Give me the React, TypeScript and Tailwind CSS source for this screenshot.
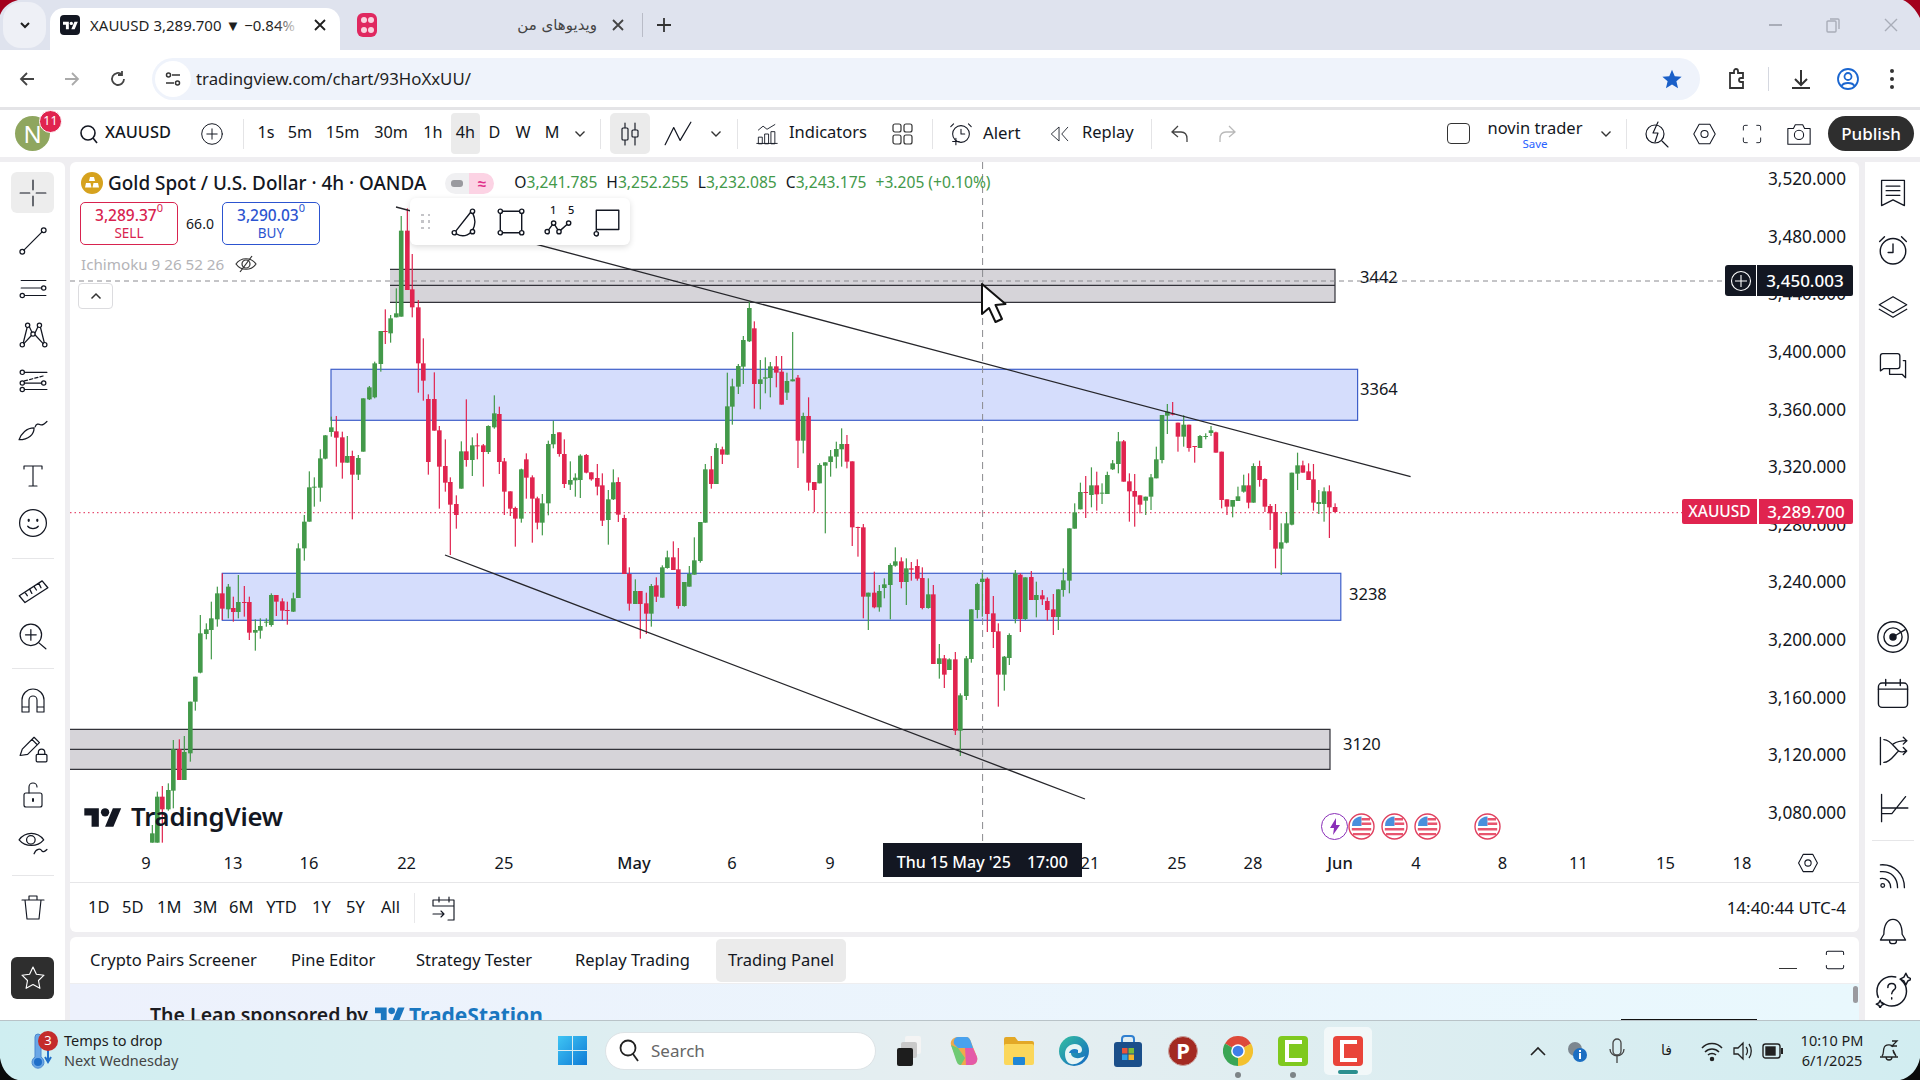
import React from "react";

type C = [number, number, number, number, number, number];
const G = 1, R = 0;
const sec11: C[] = [
[37,G,1300,1328,1275,1328],[52,G,1190,1328,1175,1328],[67,R,1190,1228,1158,1328],[85,G,1170,1228,1150,1232],[100,G,1048,1172,1020,1225],[118,R,1048,1140,1018,1140],[133,G,1056,1140,1008,1140],[151,G,905,1060,905,1085],[166,G,830,905,830,932],[181,G,700,818,645,820],[199,G,688,702,670,718],[214,G,655,690,605,778],[232,G,580,658,560,680],[247,R,580,626,520,660],[265,G,560,628,552,655],[280,R,624,636,590,665],[295,G,606,636,525,655],[313,R,606,608,558,650],[328,R,606,698,590,720],[346,G,690,698,658,752],[361,G,678,692,655,716],[379,G,665,668,655,680],[394,G,585,675,580,680],[409,R,585,605,585,648],[427,R,604,632,595,660],[442,R,630,632,605,674],[460,G,595,635,578,636],[475,G,445,594,430,594],[493,G,365,445,345,482],[508,G,262,365,214,365],[523,G,260,263,232,320],[541,G,175,263,148,305],[556,G,106,176,105,178],[574,G,82,96,50,110],[589,R,94,113,48,200],[607,R,112,188,95,236],[622,G,168,188,108,188],[637,R,168,224,152,358],[655,G,174,224,165,240],
];
const sec7: C[] = [
[547,G,595,755,595,755],[562,G,562,598,558,600],[575,G,490,592,485,595],[590,G,393,492,393,515],[601,R,393,395,328,432],[614,G,355,400,345,428],[628,G,340,352,265,352],[640,G,92,350,48,350],[655,R,92,270,25,270],[667,R,268,322,162,352],
];
const sec12: C[] = [
[55,R,22,190,0,278],[70,R,190,242,115,302],[85,R,297,486,283,524],[103,R,297,392,217,392],[118,R,391,500,378,626],[136,R,498,548,418,575],[151,R,546,614,532,765],[169,R,612,645,586,686],[184,G,454,566,424,566],[199,R,454,480,298,500],[217,G,436,480,412,528],[232,R,436,438,400,478],[250,R,436,456,432,560],[265,G,378,456,376,462],[283,G,340,382,286,386],[298,R,342,486,320,522],[313,R,484,575,474,645],[331,R,574,626,574,648],[346,R,624,656,620,740],[364,G,508,656,506,668],[379,R,478,533,460,596],[397,R,532,596,526,728],[412,R,595,668,590,688],[427,G,610,668,582,706],[445,G,432,610,422,646],[460,G,402,433,362,445],[478,R,397,462,397,470],[493,R,462,552,418,564],[511,G,540,554,484,570],[526,G,533,541,520,590],[541,G,467,540,463,594],[559,R,465,518,462,520],[574,R,517,538,517,542],[592,R,534,560,492,586],[607,R,556,662,520,678],[625,G,598,660,570,734],[640,G,547,598,508,600],[655,R,546,644,532,666],[673,R,654,822,644,822],[688,R,822,911,802,932],[706,G,873,912,838,912],[721,R,873,912,873,1016],[739,R,910,941,878,1002],[754,G,858,941,852,980],[769,R,856,890,832,906],[787,G,802,893,796,893],[802,G,772,804,752,806],[820,R,772,810,724,810],[835,R,808,918,744,926],[853,G,846,918,846,920],[868,G,822,860,798,860],[883,G,781,824,712,824],[901,G,666,783,666,788],[916,G,508,668,492,668],[934,R,508,552,468,566],[949,G,444,552,430,552],[967,R,448,464,440,492],[982,G,319,464,218,464],[997,G,259,320,236,374],[1015,G,198,260,192,282],[1030,G,120,200,108,252],[1048,G,24,124,4,126],[1063,R,85,252,64,326],[1081,G,238,252,180,328],[1096,G,232,236,172,280],[1111,G,199,234,186,292],[1129,R,199,218,168,262],
];
const sec9a: C[] = [
[4,R,215,314,168,314],[17,G,243,278,218,300],[31,G,238,244,96,244],[44,R,233,422,225,504],[57,G,348,422,338,460],[70,R,348,548,292,572],[84,R,546,570,546,636],[97,G,495,550,490,550],[111,G,487,497,487,700],[124,G,469,486,450,530],[138,G,447,470,425,505],[151,G,432,448,385,500],[164,R,432,485,405,505],[177,R,484,682,484,738],[191,R,681,683,680,770],
];
const sec10: C[] = [
[250,R,-38,170,-48,235],[265,G,158,170,158,270],[283,R,158,202,95,205],[298,G,153,202,135,215],[313,G,133,144,115,175],[331,G,75,135,70,238],[346,G,64,77,22,80],[364,R,64,126,52,145],[379,G,85,126,55,195],[394,R,85,89,66,122],[412,R,78,116,58,122],[427,R,114,204,82,208],[445,G,163,204,115,206],[460,R,163,372,135,372],[478,G,355,372,312,416],[493,R,355,404,345,444],[508,G,358,390,355,390],[526,R,358,572,336,585],[541,G,466,572,460,648],[559,G,355,468,348,480],[574,G,208,357,208,368],[592,G,132,210,128,235],[607,G,116,126,100,230],[622,R,116,222,112,276],[640,R,220,276,168,324],[655,R,274,404,250,500],[673,G,350,404,348,452],[688,G,285,354,280,375],[706,G,100,237,90,250],[721,R,104,237,100,276],[736,G,112,237,112,240],[754,R,111,180,93,180],[769,G,165,180,125,232],[787,R,166,178,150,195],[802,R,183,210,172,242],[820,R,208,231,162,285],[835,G,148,231,148,270],[850,G,121,150,85,170],
];
const sec9b: C[] = [
[709,G,685,842,685,880],[722,G,637,686,610,686],[736,G,576,628,548,628],[749,R,576,578,528,654],[763,G,556,585,502,622],[776,R,556,583,515,632],[789,G,578,580,550,612],[802,G,525,582,515,582],[815,G,490,508,480,510],[829,G,424,492,396,520],[842,R,424,545,420,545],[856,R,544,574,520,665],[869,R,573,590,522,680],[882,R,586,614,586,640],[896,G,590,602,590,645],[909,G,532,590,522,630],[922,G,478,535,440,535],[936,G,345,480,345,490],[949,G,335,347,312,402],[962,R,340,344,306,346],[975,R,368,410,368,455],[989,G,374,410,346,440],[1002,R,374,444,374,455],[1016,R,438,440,438,488],[1029,G,408,444,405,444],[1043,G,408,411,400,418],[1056,G,391,399,378,408],[1068,R,397,458,395,458],[1082,R,455,600,455,625],[1095,R,598,620,598,645],[1109,G,600,620,600,652],[1122,G,589,603,560,603],[1136,G,556,575,524,578],[1148,R,556,608,520,625],[1160,G,498,608,490,608],[1175,R,498,540,482,560],[1188,R,537,620,535,636],[1201,R,618,640,612,690],[1214,R,636,746,612,805],[1228,G,727,746,670,825],[1241,G,670,728,636,730],[1254,G,518,674,518,676],[1268,G,496,521,458,570],[1281,R,496,518,482,518],[1295,R,514,540,490,540],[1307,R,538,608,492,632],[1320,G,606,612,570,642],[1333,G,574,612,562,665],[1346,R,574,622,556,714],[1360,R,621,636,610,637],
];

type Seg = { d: C[]; ox: number; sx: number; oy: number };
const segs: Seg[] = [
  { d: sec11, ox: 140, sx: 3, oy: 400 },
  { d: sec7, ox: 140, sx: 2.45, oy: 200 },
  { d: sec12, ox: 400, sx: 3, oy: 300 },
  { d: sec9a, ox: 780, sx: 2.45, oy: 300 },
  { d: sec10, ox: 780, sx: 3, oy: 540 },
  { d: sec9b, ox: 780, sx: 2.45, oy: 300 },
];

function Candles() {
  const out: React.ReactNode[] = [];
  segs.forEach((s, si) =>
    s.d.forEach((c, i) => {
      const x = s.ox + c[0] / s.sx;
      const col = c[1] ? "#43994a" : "#e0244f";
      const y = (v: number) => s.oy + v / 3;
      out.push(
        <g key={si + "-" + i} fill={col} stroke="none">
          <rect x={x - 0.6} y={y(c[4])} width={1.2} height={Math.max(0, y(c[5]) - y(c[4]))} />
          <rect x={x - 2.3} y={y(c[2])} width={4.6} height={Math.max(1, y(c[3]) - y(c[2]))} />
        </g>
      );
    })
  );
  return <>{out}</>;
}

const Ink = "#131722";

function I({ s = 28, w, h, children, sw = 1.15, c = Ink }: { s?: number; w?: number; h?: number; children: React.ReactNode; sw?: number; c?: string }) {
  return (
    <svg width={w ?? s} height={h ?? s} viewBox="0 0 28 28" fill="none" stroke={c} strokeWidth={sw} strokeLinecap="round" strokeLinejoin="round" className="shrink-0 block">
      {children}
    </svg>
  );
}

function TVMark({ w = 38, h = 26, fill = "#131722" }: { w?: number; h?: number; fill?: string }) {
  return (
    <svg width={w} height={h} viewBox="0 0 36 26" fill={fill} className="shrink-0 block">
      <path d="M14 22H7V11H0V4h14v18zM28 22h-8l7.500-18h8L28 22z" />
      <circle cx="20" cy="8" r="4" />
    </svg>
  );
}

const Sep = () => <div className="w-px h-[30px] bg-[#e4e4e6] shrink-0" />;
const HSep = () => <div className="h-px w-[42px] bg-[#e6e6e8] shrink-0" />;

function TabStrip() {
  return (
    <div className="h-[50px] bg-[#dfe3ee] flex items-end shrink-0 relative">
      <div className="w-[43px] h-[46px] ml-[3px] rounded-[18px] bg-[#eef0f6] flex items-center justify-center absolute left-0 top-[2px]">
        <svg width="14" height="14" viewBox="0 0 14 14" fill="none" stroke="#1f1f1f" strokeWidth="2"><path d="M3 5l4 4 4-4" /></svg>
      </div>
      <div className="ml-[50px] w-[290px] h-[42px] pb-[8px] bg-white rounded-t-[14px] flex items-center relative z-10">
        <div className="ml-[10px] w-[20px] h-[20px] rounded-[4px] bg-[#131722] flex items-center justify-center shrink-0">
          <TVMark w={15} h={11} fill="#fff" />
        </div>
        <div className="ml-[10px] w-[210px] overflow-hidden whitespace-nowrap text-[15px] text-[#1f1f1f] relative">
          XAUUSD 3,289.700 ▼ −0.84% n
          <div className="absolute right-0 top-0 bottom-0 w-[24px] bg-gradient-to-r from-transparent to-white" />
        </div>
        <svg width="12" height="12" viewBox="0 0 12 12" stroke="#1f1f1f" strokeWidth="1.800" className="ml-[14px] shrink-0"><path d="M1 1l10 10M11 1L1 11" /></svg>
      </div>
      <div className="h-[42px] pb-[8px] flex items-center">
        <div className="ml-[17px] w-[20px] h-[24px] rounded-[6px] bg-[#e0285f] flex flex-wrap items-center justify-center p-[3px] gap-[1px] shrink-0">
          <span className="w-[6px] h-[6px] rounded-full bg-white/80" />
          <span className="w-[6px] h-[6px] rounded-full bg-white/80" />
          <span className="w-[6px] h-[6px] rounded-full bg-white/80" />
          <span className="w-[6px] h-[6px] rounded-full bg-white/80" />
        </div>
        <div dir="rtl" className="ml-[138px] w-[82px] text-[15px] text-[#444] font-['DejaVu_Sans',sans-serif] whitespace-nowrap">ویدیوهای من</div>
        <svg width="12" height="12" viewBox="0 0 12 12" stroke="#444" strokeWidth="1.800" className="ml-[15px] shrink-0"><path d="M1 1l10 10M11 1L1 11" /></svg>
        <div className="ml-[18px] w-px h-[24px] bg-[#b9bcc7]" />
        <svg width="16" height="16" viewBox="0 0 16 16" stroke="#333" strokeWidth="1.800" className="ml-[13px] shrink-0"><path d="M8 1v14M1 8h14" /></svg>
      </div>
      <div className="ml-auto h-[42px] pb-[8px] flex items-center pr-[22px] gap-[44px]">
        <div className="w-[13px] h-[1.500px] bg-[#a9adb8]" />
        <svg width="14" height="16" viewBox="0 0 14 16" fill="none" stroke="#a9adb8" strokeWidth="1.400"><rect x="1" y="4" width="9" height="11" rx="1" /><path d="M4 2h8a1 1 0 0 1 1 1v9" /></svg>
        <svg width="14" height="14" viewBox="0 0 14 14" stroke="#a9adb8" strokeWidth="1.400"><path d="M1 1l12 12M13 1L1 13" /></svg>
      </div>
    </div>
  );
}

function AddressBar() {
  return (
    <div className="h-[57px] bg-white flex items-center shrink-0">
      <svg width="18" height="18" viewBox="0 0 18 18" fill="none" stroke="#444" strokeWidth="1.800" className="ml-[18px] shrink-0"><path d="M16 9H3M9 3L3 9l6 6" /></svg>
      <svg width="18" height="18" viewBox="0 0 18 18" fill="none" stroke="#aaa" strokeWidth="1.800" className="ml-[27px] shrink-0"><path d="M2 9h13M9 3l6 6-6 6" /></svg>
      <svg width="18" height="18" viewBox="0 0 18 18" fill="none" stroke="#444" strokeWidth="1.800" className="ml-[28px] shrink-0"><path d="M15 9a6 6 0 1 1-2-4.500M13 1v4h-4" /></svg>
      <div className="ml-[25px] w-[1548px] h-[42px] rounded-full bg-[#eff3fb] flex items-center pl-[3px] shrink-0">
        <div className="w-[36px] h-[36px] rounded-full bg-white flex items-center justify-center shrink-0">
          <svg width="16" height="16" viewBox="0 0 16 16" fill="none" stroke="#333" strokeWidth="1.500"><path d="M7 4h8M1 12h8" /><circle cx="3.500" cy="4" r="2" /><circle cx="12.500" cy="12" r="2" /></svg>
        </div>
        <div className="ml-[5px] mt-[1px] text-[16.800px] text-[#1f1f1f] whitespace-nowrap">tradingview.com/chart/93HoXxUU/</div>
        <svg width="22" height="22" viewBox="0 0 24 24" fill="#1a5fc8" className="ml-auto mr-[17px] shrink-0"><path d="M12 2l3 7 7.500.6-5.700 4.900 1.800 7.500L12 18l-6.600 4 1.800-7.500L1.500 9.600 9 9z" /></svg>
      </div>
      <svg width="24" height="24" viewBox="0 0 24 24" fill="none" stroke="#333" strokeWidth="1.800" className="ml-[25px] shrink-0"><path d="M5 6h4V4a2 2 0 0 1 4 0v2h5v5h-2a2 2 0 0 0 0 4h2v6H5z" /></svg>
      <div className="ml-[19px] w-px h-[24px] bg-[#d5d8e0] shrink-0" />
      <svg width="24" height="24" viewBox="0 0 24 24" fill="none" stroke="#333" strokeWidth="2" className="ml-[20px] shrink-0"><path d="M12 3v14M6 12l6 6 6-6M3 21h18" /></svg>
      <svg width="24" height="24" viewBox="0 0 24 24" fill="none" stroke="#1a66d0" strokeWidth="1.800" className="ml-[23px] shrink-0"><circle cx="12" cy="12" r="10" /><circle cx="12" cy="9.500" r="3.500" /><path d="M5.500 19c2-4 11-4 13 0" /></svg>
      <div className="ml-[30px] flex flex-col gap-[4px] shrink-0">
        <span className="w-[4px] h-[4px] rounded-full bg-[#333]" />
        <span className="w-[4px] h-[4px] rounded-full bg-[#333]" />
        <span className="w-[4px] h-[4px] rounded-full bg-[#333]" />
      </div>
    </div>
  );
}

const Chev = ({ cls }: { cls: string }) => (
  <div className={"flex items-center justify-center shrink-0 " + cls}>
    <svg width="12" height="8" viewBox="0 0 12 8" fill="none" stroke="#333" strokeWidth="1.400"><path d="M1.500 1.500L6 6l4.500-4.500" /></svg>
  </div>
);

function TF({ t, cls, active }: { t: string; cls: string; active?: boolean }) {
  return (
    <div className={"h-[41px] flex items-center justify-center text-[16.200px] pb-[2px] rounded-[4px] shrink-0 " + cls + (active ? " bg-[#ebebeb]" : "")}>{t}</div>
  );
}

function TopBar() {
  return (
    <div className="h-[47px] bg-white flex items-center shrink-0 text-[#131722]">
      <div className="relative ml-[15px] w-[35px] h-[35px] rounded-full bg-[#8fa65f] flex items-center justify-center text-white text-[24px] shrink-0">
        N
        <div className="absolute -right-[12px] -top-[6px] w-[23px] h-[23px] rounded-full bg-[#e0244f] border border-white flex items-center justify-center text-[12.500px] text-white">11</div>
      </div>
      <div className="ml-[30px] shrink-0"><svg width="18" height="20" viewBox="0 0 18 20" fill="none" stroke="#131722" strokeWidth="1.600"><circle cx="8" cy="9" r="7" /><path d="M13 14l4 5" /></svg></div>
      <div className="ml-[7px] mb-[2px] w-[72px] text-[16.400px] font-medium shrink-0">XAUUSD</div>
      <div className="ml-[23px] w-[24px] shrink-0"><I s={24}><circle cx="14" cy="14" r="12" /><path d="M14 8v12M8 14h12" /></I></div>
      <div className="ml-[19px]"><Sep /></div>
      <TF t="1s" cls="ml-[6px] w-[32px]" />
      <TF t="5m" cls="w-[36px]" />
      <TF t="15m" cls="w-[49px]" />
      <TF t="30m" cls="w-[48px]" />
      <TF t="1h" cls="w-[36px]" />
      <TF t="4h" cls="w-[29px]" active />
      <TF t="D" cls="w-[29px]" />
      <TF t="W" cls="w-[28px]" />
      <TF t="M" cls="w-[30px]" />
      <Chev cls="w-[26px]" />
      <div className="ml-[7px]"><Sep /></div>
      <div className="ml-[9px] w-[40px] h-[41px] bg-[#ebebeb] rounded-[5px] flex items-center justify-center shrink-0">
        <I s={28}><path d="M9 3v22M19 3v22" /><rect x="6" y="8" width="6" height="12" rx="1" fill="#ebebeb" /><rect x="16" y="10" width="6" height="7" rx="1" fill="#ebebeb" /></I>
      </div>
      <div className="ml-[10px] w-[35px] flex justify-center shrink-0"><I s={30}><path d="M2 24L10 8l6 12L26 3" /></I></div>
      <Chev cls="ml-[7px] w-[28px]" />
      <div className="ml-[7px]"><Sep /></div>
      <div className="ml-[18px] w-[22px] shrink-0"><I w={22} h={28}><path d="M3 9l6-5 5 4 10-6" /><path d="M3 26V18h5v8zM11 26V14h5v12zM19 26V11h5v15zM1 26h26" /></I></div>
      <div className="ml-[11px] mb-[2px] w-[80px] text-[16.500px] whitespace-nowrap shrink-0">Indicators</div>
      <div className="ml-[23px] w-[21px] shrink-0"><svg width="21" height="22" viewBox="0 0 21 22" fill="none" stroke="#333" strokeWidth="1.200"><rect x="1" y="1" width="8" height="8" rx="2" /><rect x="12" y="1" width="8" height="8" rx="2" /><rect x="1" y="12" width="8" height="9" rx="2" /><rect x="12" y="12" width="8" height="9" rx="2" /></svg></div>
      <div className="ml-[19px]"><Sep /></div>
      <div className="ml-[15px] w-[24px] shrink-0"><I s={26}><path d="M3 6l3-3M25 6l-3-3" /><circle cx="14" cy="14" r="9" /><path d="M14 9v5h4" /><path d="M5 22h7M8.500 18.500v7" /></I></div>
      <div className="ml-[11px] mb-[2px] w-[42px] text-[16.800px] shrink-0">Alert</div>
      <div className="ml-[24px] w-[21px] shrink-0"><I w={21} h={24}><path d="M13 5L3 14l10 9zM25 5l-8 9 8 9" /></I></div>
      <div className="ml-[12px] mb-[2px] w-[55px] text-[16.500px] shrink-0">Replay</div>
      <div className="ml-[14px]"><Sep /></div>
      <div className="ml-[18px] w-[20px] shrink-0"><svg width="20" height="20" viewBox="0 0 20 20" fill="none" stroke="#444" strokeWidth="1.300"><path d="M8 2L2 8l6 5M2 8h9c4 0 6 3 6 7v3" /></svg></div>
      <div className="ml-[27px] w-[20px] shrink-0"><svg width="20" height="20" viewBox="0 0 20 20" fill="none" stroke="#b9b9b9" strokeWidth="1.300"><path d="M12 2l6 6-6 5M18 8H9c-4 0-6 3-6 7v3" /></svg></div>
      <div className="ml-auto w-[23px] h-[21px] border border-[#333] rounded-[4px] shrink-0" />
      <div className="ml-[15px] w-[100px] flex flex-col items-center shrink-0 leading-none">
        <div className="text-[16.500px] leading-[20px] whitespace-nowrap">novin trader</div>
        <div className="text-[11.500px] leading-[12px] text-[#2962ff]">Save</div>
      </div>
      <Chev cls="ml-[14px] w-[14px]" />
      <div className="ml-[13px]"><Sep /></div>
      <div className="ml-[16px] w-[26px] shrink-0"><I s={28}><circle cx="12" cy="14" r="9" /><path d="M19 21l6 6M15 2l-5 11h5l-3 9" /></I></div>
      <div className="ml-[23px] w-[25px] shrink-0"><I w={25} h={28}><path d="M8 3h12l6 11-6 11H8L2 14z" /><circle cx="14" cy="14" r="4" /></I></div>
      <div className="ml-[24px] w-[22px] shrink-0"><I w={22} h={26}><path d="M3 9V5a2 2 0 0 1 2-2h3M20 3h3a2 2 0 0 1 2 2v4M25 19v4a2 2 0 0 1-2 2h-3M8 25H5a2 2 0 0 1-2-2v-4" /></I></div>
      <div className="ml-[23px] w-[26px] shrink-0"><I s={26}><path d="M2 8h6l2-4h8l2 4h6v17H2z" /><circle cx="14" cy="15" r="5" /></I></div>
      <div className="ml-[16px] mr-[6px] w-[86px] h-[35px] rounded-full bg-[#2e2e2e] text-white text-[17px] font-medium flex items-center justify-center shrink-0">Publish</div>
    </div>
  );
}

const LeftIcons: React.ReactNode[][] = [
  [
    <I key="a" s={30}><circle cx="4" cy="24" r="2.200" /><circle cx="24" cy="4" r="2.200" /><path d="M5.500 22.500l17-17" /></I>,
    <I key="b" s={30}><path d="M3 7h23M3 14h19M7 21h19" /><circle cx="24" cy="14" r="2" /><circle cx="4" cy="21" r="2" /></I>,
    <I key="c" s={30}><circle cx="4" cy="23" r="2" /><circle cx="9" cy="5" r="2" /><circle cx="20" cy="5" r="2" /><circle cx="25" cy="23" r="2" /><circle cx="14" cy="13" r="2" /><path d="M5 21L8.500 7M10.500 6L13 11.500M16 12L18.500 6.500M21 7L24.500 21M5.500 22L12.500 14.500M16 14L23.500 22" /></I>,
    <I key="d" s={30}><circle cx="4" cy="5" r="2" /><circle cx="4" cy="15" r="2" /><circle cx="4" cy="21" r="2" /><circle cx="24" cy="15" r="2" /><path d="M6 5h21M6 21h21M6 15h16" /><path d="M6 13l19-5" strokeDasharray="3 2" /></I>,
    <I key="e" s={30}><path d="M1 24c2-6 7-11 14-11 0 6-5 11-14 11zM16 12c1-3 3-3 5-2s4-1 6-3" /></I>,
    <I key="f" s={28}><path d="M5 7V4h18v3M14 4v20M10 24h8" /></I>,
    <I key="g" s={30}><circle cx="14" cy="14" r="12.500" /><path d="M9 17c2 3 8 3 10 0" /><path d="M10 11v1M18 11v1" strokeWidth="2" /></I>,
  ],
  [
    <I key="h" s={32}><path d="M2 19L22 6l5 6L7 25zM7 16l2 3M11 13l2 4M15 11l2 3M19 8l2 4" /></I>,
    <I key="i" s={30}><circle cx="12" cy="12" r="10" /><path d="M12 7v10M7 12h10M19 19l7 6" /></I>,
  ],
  [
    <I key="j" s={28}><path d="M3 25V13a11 11 0 0 1 22 0v12h-7V13a4 4 0 0 0-8 0v12zM3 20h7M18 20h7" /></I>,
    <I key="k" s={30}><path d="M2 21l2-6L15 4l5 5L9 20zM13 6l5 5" /><rect x="17" y="20" width="10" height="7" rx="1" /><path d="M19 20v-2a3 3 0 0 1 6 0v2" /></I>,
    <I key="l" s={28}><rect x="5" y="12" width="18" height="14" rx="2" /><path d="M10 12V6a4 4 0 0 1 8 0" /><path d="M14 18v2" strokeWidth="2" /></I>,
    <I key="m" s={30}><path d="M1 12c6-8 17-8 23 0-6 7-17 7-23 0z" /><circle cx="12" cy="12" r="4" /><path d="M15 25c2-5 6-5 7-3s3 1 5-1" /></I>,
  ],
  [
    <I key="n" s={28}><path d="M3 7h22M6 7l2 19h12l2-19M10 7V3h8v4" /></I>,
  ],
];

const Cell = ({ children, cls = "h-[47px]" }: { children: React.ReactNode; cls?: string }) => (
  <div className={"w-full flex items-center justify-center shrink-0 " + cls}>{children}</div>
);

function LeftBar() {
  return (
    <div className="w-[65px] bg-white flex flex-col items-center shrink-0 rounded-tr-[6px]">
      <div className="mt-[10px] w-[43px] h-[41px] rounded-[6px] bg-[#ededed] flex items-center justify-center shrink-0">
        <I s={30}><path d="M14 2v9M14 17v9M2 14h9M17 14h9" /></I>
      </div>
      <div className="mt-[4px]" />
      {LeftIcons[0].map((n, i) => <Cell key={i}>{n}</Cell>)}
      <div className="mt-[12px]"><HSep /></div>
      <div className="mt-[7px]" />
      {LeftIcons[1].map((n, i) => <Cell key={i}>{n}</Cell>)}
      <div className="mt-[8px]"><HSep /></div>
      <div className="mt-[8px]" />
      {LeftIcons[2].map((n, i) => <Cell key={i}>{n}</Cell>)}
      <div className="mt-[10px]"><HSep /></div>
      <div className="mt-[7px]" />
      {LeftIcons[3].map((n, i) => <Cell key={i}>{n}</Cell>)}
      <div className="mt-auto mb-[21px] w-[43px] h-[42px] rounded-[6px] bg-[#2e2e2e] flex items-center justify-center shrink-0">
        <I s={28} c="#fff"><path d="M14 3l3.400 7.200 7.600 1-5.500 5.300 1.400 7.800L14 20.500 7.100 24.300l1.400-7.800L3 11.200l7.600-1z" /></I>
      </div>
    </div>
  );
}

function RightBar() {
  const top = [
    <I key="a" s={32}><path d="M4 3h20v22l-10-5-10 5zM8 8h12M8 12h12M8 16h12" /></I>,
    <I key="b" s={34}><circle cx="14" cy="15" r="10.500" /><path d="M14 9v7h-4M3 7l4-4M25 7l-4-4" /></I>,
    <I key="c" s={32}><path d="M14 5L26 12 14 19 2 12zM2 16l12 7 12-7" /></I>,
    <I key="d" s={32}><path d="M3 20V7a2 2 0 0 1 2-2h13a2 2 0 0 1 2 2v9a2 2 0 0 1-2 2H6zM23 11h2v15l-3-3H11v-5" /></I>,
  ];
  const mid = [
    <I key="e" s={34}><circle cx="14" cy="14" r="12.500" /><circle cx="14" cy="14" r="7.500" /><circle cx="14" cy="14" r="2.500" fill="#131722" /><path d="M14 14l10-6" /></I>,
    <I key="f" s={34}><rect x="2" y="5" width="24" height="20" rx="3" /><path d="M2 10h24M8 2v5M20 2v5" /></I>,
    <I key="g" s={32}><path d="M3 2v24M6 4c6 0 10 8 13 10s4 0 7 0M23 11l3 3-3 3M6 24c6 0 10-8 13-10M23 2l3 3-3 3" /><path d="M14 8c3-2 6-3 12-3" /></I>,
    <I key="h" s={32}><path d="M4 2v24M4 19h9l12-15M4 14h23" /></I>,
  ];
  const bot = [
    <I key="i" s={32}><circle cx="5" cy="24" r="1.600" /><path d="M3 18c5-1 9 3 9 8M3 12c9-1 15 5 15 14M3 6c12-1 21 8 21 20" /></I>,
    <I key="j" s={32}><path d="M14 3c-5 0-8 5-8 13l-3 5h22l-3-5c0-8-3-13-8-13zM11 22c0 3 6 3 6 0" /></I>,
    <I key="k" s={36}><circle cx="13" cy="15" r="11.500" strokeDasharray="26 5" /><path d="M10 12c0-4 6-4 6 0 0 2-3 2-3 5M13 20v1" /><path d="M24 1l1.500 3 3 1.500-3 1.500L24 10l-1.500-3-3-1.500 3-1.500z" /><path d="M4 22l1 2 2 1-2 1-1 2-1-2-2-1 2-1z" /></I>,
  ];
  return (
    <div className="w-[55px] bg-white flex flex-col shrink-0">
      <div className="mt-[2px]" />
      {top.map((n, i) => <Cell key={i} cls="h-[57px]">{n}</Cell>)}
      <div className="mt-[216px]" />
      {mid.map((n, i) => <Cell key={i} cls="h-[57px]">{n}</Cell>)}
      <div className="mt-[4px] flex justify-center"><HSep /></div>
      <div className="mt-[4px]" />
      {bot.map((n, i) => <Cell key={i} cls="h-[58px]">{n}</Cell>)}
    </div>
  );
}

function Flag() {
  return (
    <svg width="27" height="27" viewBox="0 0 27 27" className="block">
      <circle cx="13.500" cy="13.500" r="12.500" fill="#fff" stroke="#e0405f" strokeWidth="1.400" />
      <path d="M5 8a10 10 0 0 1 8.500-4.500V13H4a10 10 0 0 1 1-5z" fill="#4a8fdc" />
      <path d="M13.500 5h8.500v2.500h-8.500zM13.500 9.500h9.700v2.500h-9.700zM3.800 15h19.400v2.500H3.800zM5 20h17v2.300H5z" fill="#e8556f" />
    </svg>
  );
}

const prices = ["3,520.000", "3,480.000", "3,440.000", "3,400.000", "3,360.000", "3,320.000", "3,280.000", "3,240.000", "3,200.000", "3,160.000", "3,120.000", "3,080.000"];
const times: [string, number][] = [["9", 146], ["13", 233], ["16", 309], ["22", 406.6], ["25", 504], ["May", 634], ["6", 732], ["9", 830], ["21", 1090], ["25", 1177], ["28", 1253], ["Jun", 1340], ["4", 1416], ["8", 1502.5], ["11", 1578.5], ["15", 1665.5], ["18", 1742]];

function Chart() {
  return (
    <div className="relative h-[681px] overflow-hidden shrink-0 text-[#131722]">
      <svg className="absolute inset-0 block" width="1789" height="681" viewBox="70 162 1789 681">
        <g fill="#d6d4d9" stroke="#33333a" strokeWidth="1.200">
          <rect x="390" y="269.300" width="945" height="33" stroke="none" />
          <path d="M390 269.300H1335V302.300H390M390 285.300H1335" fill="none" />
          <rect x="70" y="729.300" width="1260" height="40" stroke="none" />
          <path d="M70 729.300H1330V769.300H70M70 749.300H1330" fill="none" />
        </g>
        <g fill="#d5ddfc" stroke="#3f5fc9" strokeWidth="1.200">
          <rect x="331" y="369.300" width="1026.600" height="51" />
          <rect x="222.300" y="573.300" width="1118.500" height="47" />
        </g>
        <path d="M70 281H1725" stroke="#8a8a8f" strokeDasharray="5 4" strokeWidth="1" />
        <path d="M982.600 162V843" stroke="#8a8a8f" strokeDasharray="7 5" strokeWidth="1" />
        <path d="M70 512.700H1682" stroke="#e0244f" strokeDasharray="1.500 3" strokeWidth="1" />
        <Candles />
        <path d="M396 207L1410.600 476.700M445 555L1085 799" stroke="#26262b" strokeWidth="1.300" fill="none" />
        <path d="M982 284v30l7-6 6.500 14 6.500-3-6.500-14 10-1z" fill="#fff" stroke="#111" strokeWidth="2" strokeLinejoin="round" />
      </svg>

      {/* legend */}
      <div className="absolute left-[11px] top-[7px] flex items-center">
        <div className="w-[22px] h-[22px] rounded-full bg-[#d6a21e] flex items-center justify-center">
          <svg width="14" height="12" viewBox="0 0 14 12" fill="#fff"><path d="M5 0h4l1 4H4zM1 6h4.500l1 4.500H0zM8.500 6H13l1 4.500H7.500z" /></svg>
        </div>
        <div className="ml-[5px] text-[18.900px] font-medium whitespace-nowrap">Gold Spot / U.S. Dollar · 4h · OANDA</div>
        <div className="ml-[19px] w-[49px] h-[21px] rounded-full overflow-hidden flex shrink-0">
          <div className="w-[24px] bg-[#f0f0f2] flex items-center justify-center"><span className="w-[12px] h-[7px] rounded-[3px] bg-[#9a9a9f]" /></div>
          <div className="flex-1 bg-[#fcd3e4] flex items-center justify-center text-[#e0308a] text-[15px] leading-none font-bold">≈</div>
        </div>
        <div className="ml-[20px] text-[15.600px] whitespace-nowrap text-[#43994a]">
          <span className="text-[#131722]">O</span>3,241.785 <span className="text-[#131722] ml-[5px]">H</span>3,252.255 <span className="text-[#131722] ml-[5px]">L</span>3,232.085 <span className="text-[#131722] ml-[5px]">C</span>3,243.175 <span className="ml-[5px]">+3.205 (+0.10%)</span>
        </div>
      </div>
      <div className="absolute left-[10px] top-[40px] flex items-center">
        <div className="w-[98px] h-[43px] rounded-[5px] border border-[#d8234f] bg-white flex flex-col items-center justify-center text-[#d8234f] leading-none">
          <div className="text-[15.500px] leading-[19px] font-medium">3,289.37<sup className="text-[11px] align-[3px] font-normal">0</sup></div>
          <div className="text-[13.500px] leading-[17px]">SELL</div>
        </div>
        <div className="w-[44px] text-center text-[14px]">66.0</div>
        <div className="w-[98px] h-[43px] rounded-[5px] border border-[#2c54d0] bg-white flex flex-col items-center justify-center text-[#2c54d0] leading-none">
          <div className="text-[15.500px] leading-[19px] font-medium">3,290.03<sup className="text-[11px] align-[3px] font-normal">0</sup></div>
          <div className="text-[13.500px] leading-[17px]">BUY</div>
        </div>
      </div>
      <div className="absolute left-[11px] top-[91px] flex items-center text-[#b4b4b8] text-[15.200px] whitespace-nowrap">
        Ichimoku 9 26 52 26
        <svg width="22" height="22" viewBox="0 0 22 22" fill="none" stroke="#333" strokeWidth="1.200" className="ml-[11px]"><path d="M1 11c5-7 15-7 20 0-5 7-15 7-20 0z" /><circle cx="11" cy="11" r="4" /><path d="M5 19L17 3" /></svg>
      </div>
      <div className="absolute left-[8px] top-[121px] w-[35px] h-[26px] rounded-[4px] border border-[#dcdcdf] bg-white flex items-center justify-center">
        <svg width="12" height="8" viewBox="0 0 12 8" fill="none" stroke="#333" strokeWidth="1.500"><path d="M1.500 6.500L6 2l4.500 4.500" /></svg>
      </div>

      {/* floating drawing toolbar */}
      <div className="absolute left-[340px] top-[36px] w-[220px] h-[47px] bg-white rounded-[6px] shadow-[0_2px_6px_rgba(0,0,0,0.14)] flex items-center">
        <div className="ml-[11px] w-[9px] grid grid-cols-2 gap-[4px] shrink-0">
          {[0, 1, 2, 3, 4, 5].map((k) => <span key={k} className="w-[2.500px] h-[2.500px] bg-[#c4c4c8]" />)}
        </div>
        <div className="ml-[20px] shrink-0"><I s={30} sw={1.300}><path d="M5 23L20 4M21 5c3 7 3 11 0 17M6 25c5 3 10 2 14-2" /><circle cx="4" cy="24" r="2" fill="#fff" /><circle cx="21" cy="4" r="2" fill="#fff" /><circle cx="21" cy="23" r="2" fill="#fff" /></I></div>
        <div className="ml-[16px] shrink-0"><I s={30} sw={1.300}><rect x="4" y="4" width="20" height="20" /><circle cx="4" cy="4" r="2" fill="#fff" /><circle cx="24" cy="4" r="2" fill="#fff" /><circle cx="4" cy="24" r="2" fill="#fff" /><circle cx="24" cy="24" r="2" fill="#fff" /></I></div>
        <div className="ml-[16px] relative w-[34px] h-[30px] shrink-0">
          <I w={34} h={30} sw={1.300}><path d="M3 23L9 15l5 8 9-8" /><circle cx="3" cy="23" r="2" fill="#fff" /><circle cx="9" cy="15" r="2" fill="#fff" /><circle cx="14" cy="23" r="2" fill="#fff" /><circle cx="23" cy="15" r="2" fill="#fff" /></I>
          <span className="absolute left-[8px] -top-[5px] text-[11px] font-medium">1</span>
          <span className="absolute left-[26px] -top-[5px] text-[11px] font-medium">5</span>
        </div>
        <div className="ml-[16px] shrink-0"><I s={30} sw={1.300}><path d="M4 3h21v18H5M4 3v19" /><circle cx="4" cy="25" r="2" fill="#fff" /></I></div>
      </div>

      {/* zone labels */}
      <div className="absolute left-[1290px] top-[103px] text-[16.500px]">3442</div>
      <div className="absolute left-[1290px] top-[215px] text-[16.500px]">3364</div>
      <div className="absolute left-[1279px] top-[420px] text-[16.500px]">3238</div>
      <div className="absolute left-[1273px] top-[570px] text-[16.500px]">3120</div>

      {/* logo */}
      <div className="absolute left-[14px] top-[640px] flex items-center">
        <TVMark w={38} h={27} />
        <div className="ml-[9px] text-[25.700px] leading-[30px] font-semibold tracking-[-0.2px]">TradingView</div>
      </div>

      {/* events */}
      <div className="absolute left-[1251px] top-[651px] flex items-center">
        <div className="w-[27px] h-[27px] rounded-full border-[1.500px] border-[#8a2fb8] bg-white flex items-center justify-center">
          <svg width="12" height="17" viewBox="0 0 12 17" fill="#8a2fb8"><path d="M7 0L1 10h4l-1 7 7-10H7z" /></svg>
        </div>
        <Flag />
        <div className="ml-[6px]"><Flag /></div>
        <div className="ml-[6px]"><Flag /></div>
        <div className="ml-[33px]"><Flag /></div>
      </div>

      {/* price scale */}
      <div className="absolute right-[13px] top-[-12px] flex flex-col items-end text-[17.200px] leading-[58px]">
        {prices.map((p) => <div key={p} className="h-[57.650px]">{p}</div>)}
      </div>
      <div className="absolute left-[1655px] top-[103px] flex items-center text-white h-[31px]">
        <div className="w-[31px] h-[31px] bg-[#131722] flex items-center justify-center rounded-l-[3px]">
          <svg width="22" height="22" viewBox="0 0 22 22" fill="none" stroke="#fff" strokeWidth="1.100"><circle cx="11" cy="11" r="9.500" /><path d="M11 5v12M5 11h12" /></svg>
        </div>
        <div className="ml-px w-[96px] h-[31px] bg-[#131722] rounded-r-[2px] flex items-center justify-center text-[17px] font-medium">3,450.003</div>
      </div>
      <div className="absolute left-[1612px] top-[337px] flex items-center text-white h-[25px]">
        <div className="w-[75px] h-[25px] bg-[#e0244f] rounded-l-[2px] flex items-center justify-center text-[15.500px] font-medium">XAUUSD</div>
        <div className="ml-[2px] w-[94px] h-[25px] bg-[#e0244f] rounded-r-[2px] flex items-center justify-center text-[17px] font-medium">3,289.700</div>
      </div>
    </div>
  );
}

function TimeAxis() {
  return (
    <div className="relative h-[40px] border-b border-[#e6e6e8] text-[16.500px] text-[#131722] shrink-0">
      {times.map(([t, x], i) => (
        <div key={i} className={"absolute top-[9px] -translate-x-1/2 leading-[22px] " + (t === "May" || t === "Jun" ? "font-medium" : "")} style={{ left: x - 70 }}>{t}</div>
      ))}
      <div className="absolute left-[1727px] top-[9px]"><I s={22} sw={1.400}><path d="M8 3h12l6 11-6 11H8L2 14z" /><circle cx="14" cy="14" r="4" /></I></div>
      <div className="absolute left-[812.500px] top-0 w-[199.500px] h-[34px] pt-[3px] bg-[#131722] text-white text-[16px] font-medium flex items-center justify-center gap-[16px]">
        <span>Thu 15 May '25</span><span>17:00</span>
      </div>
    </div>
  );
}

const ranges: [string, string][] = [["1D", "ml-[18px] w-[20px]"], ["5D", "ml-[14px] w-[19px]"], ["1M", "ml-[16px] w-[20px]"], ["3M", "ml-[16px] w-[21px]"], ["6M", "ml-[15px] w-[21px]"], ["YTD", "ml-[16px] w-[31px]"], ["1Y", "ml-[15px] w-[19px]"], ["5Y", "ml-[15px] w-[19px]"], ["All", "ml-[15px] w-[21px]"]];

function RangeBar() {
  return (
    <div className="h-[49px] flex items-center text-[16.500px] text-[#131722] shrink-0">
      {ranges.map(([t, c]) => <div key={t} className={"text-center whitespace-nowrap " + c}>{t}</div>)}
      <div className="ml-[13px] w-px h-[30px] bg-[#e8e8ea]" />
      <div className="ml-[16px]"><I s={28}><path d="M2 12V6h21v20h-6M2 12h21M8 3v5M18 3v5M2 20h11M10 17l3 3-3 3" /></I></div>
      <div className="ml-auto mr-[13px] text-[17px] whitespace-nowrap">14:40:44 UTC-4</div>
    </div>
  );
}

function BottomPanel() {
  return (
    <div className="h-[83px] bg-white rounded-t-[6px] overflow-hidden shrink-0 flex flex-col">
      <div className="h-[47px] flex items-center text-[#131722] text-[16.500px] whitespace-nowrap shrink-0 border-b border-[#eeeef0]">
        <div className="ml-[20px] w-[168px]">Crypto Pairs Screener</div>
        <div className="ml-[33px] w-[85px]">Pine Editor</div>
        <div className="ml-[40px] w-[119px]">Strategy Tester</div>
        <div className="ml-[40px] w-[114px]">Replay Trading</div>
        <div className="ml-[27px] w-[130px] h-[43px] rounded-[5px] bg-[#ebebeb] flex items-center justify-center">Trading Panel</div>
        <div className="ml-auto w-[18px] h-[1.500px] bg-[#333] mt-[17px]" />
        <div className="ml-[27px] mr-[13px]"><I w={22} h={22} sw={1.300}><path d="M3 7V5a2 2 0 0 1 2-2h18a2 2 0 0 1 2 2v2M3 21v2a2 2 0 0 0 2 2h18a2 2 0 0 0 2-2v-2" /></I></div>
      </div>
      <div className="flex-1 bg-gradient-to-r from-[#edf1fc] to-[#e9f8fd] flex items-start relative overflow-hidden">
        <div className="ml-[80px] mt-[18px] flex items-center leading-[26px] text-[#1c1c22] whitespace-nowrap">
          <span className="text-[19.500px] font-semibold">The Leap sponsored by</span>
          <span className="ml-[7px]"><TVMark w={30} h={22} fill="#1a77c0" /></span>
          <span className="ml-[4px] text-[21px] text-[#1a77c0] font-bold">TradeStation</span>
        </div>
        <div className="absolute left-[1551px] bottom-0 w-[136px] h-[1.500px] bg-[#111]" />
        <div className="absolute right-[1px] top-[2px] w-[5px] h-[17px] rounded-full bg-[#9a9a9f]" />
      </div>
    </div>
  );
}

function TaskApp({ cls, children }: { cls: string; children: React.ReactNode }) {
  return <div className={"shrink-0 flex items-center justify-center " + cls}>{children}</div>;
}

function Taskbar() {
  return (
    <div className="h-[60px] border-t border-[#b9c3c8] bg-gradient-to-r from-[#cfeef1] via-[#e6eef1] to-[#d2edf1] flex items-center shrink-0 relative text-[#1c1c1c]">
      <div className="ml-[30px] relative w-[24px] h-[44px] shrink-0">
        <svg width="24" height="44" viewBox="0 0 24 44" className="absolute left-0 top-0" fill="none">
          <path d="M5 8v20a6 6 0 1 0 6 0V8a3 3 0 0 0-6 0z" fill="#6aa7e6" stroke="#4a88d0" />
          <circle cx="8" cy="33" r="4" fill="#1f6fc9" />
          <path d="M18 18v14M15 28l3 5 3-5" stroke="#1f6fc9" strokeWidth="2" />
        </svg>
        <div className="absolute left-[8px] top-[2px] w-[20px] h-[20px] rounded-full bg-[#c42b2b] text-white text-[13px] flex items-center justify-center">3</div>
      </div>
      <div className="ml-[10px] mb-[2px] w-[140px] flex flex-col text-[14.500px] leading-[20px] shrink-0">
        <div className="whitespace-nowrap">Temps to drop</div>
        <div className="whitespace-nowrap text-[#444]">Next Wednesday</div>
      </div>
      <svg width="29" height="29" viewBox="0 0 29 29" className="ml-[354px] shrink-0">
        <defs><linearGradient id="wg" x1="0" y1="0" x2="1" y2="1"><stop offset="0" stopColor="#3fc5f4" /><stop offset="1" stopColor="#0f7bd6" /></linearGradient></defs>
        <path d="M0 0h14v14H0zM15 0h14v14H15zM0 15h14v14H0zM15 15h14v14H15z" fill="url(#wg)" />
      </svg>
      <div className="ml-[18px] w-[271px] h-[38px] rounded-full bg-white border border-[#dde3e6] flex items-center shrink-0">
        <svg width="21" height="23" viewBox="0 0 21 23" fill="none" stroke="#222" strokeWidth="1.800" className="ml-[13px]"><circle cx="9" cy="9" r="7.500" /><path d="M14 15l5 7" /></svg>
        <span className="ml-[11px] text-[17px] text-[#666]">Search</span>
      </div>
      <TaskApp cls="ml-[21px] w-[24px] h-[30px]">
        <svg width="24" height="30" viewBox="0 0 24 30"><rect x="8" y="0" width="16" height="18" rx="2" fill="#f4f4f4" /><rect x="4" y="6" width="16" height="16" rx="2" fill="#c9c9c9" /><rect x="0" y="12" width="16" height="18" rx="2" fill="#1d1d1d" /></svg>
      </TaskApp>
      <TaskApp cls="ml-[28px] w-[30px] h-[32px]">
        <svg width="30" height="32" viewBox="0 0 30 32" fill="none"><path d="M9 2h8c3 0 4 2 5 5l6 15c1 4-1 8-6 8h-9c-3 0-4-2-5-5L2 10C1 6 4 2 9 2z" fill="#f0a94a" /><path d="M9 2h8c3 0 4 2 5 5l2 6H9L5 9c-1-4 1-7 4-7z" fill="#49a2ee" /><path d="M16 13h8l4 9c1 4-1 8-6 8h-5z" fill="#e45aa8" /><path d="M2 10l5 15c1 3 2 5 5 5l4-7L9 13z" fill="#6fca74" /></svg>
      </TaskApp>
      <TaskApp cls="ml-[25px] w-[30px] h-[28px]">
        <svg width="30" height="28" viewBox="0 0 30 28"><path d="M0 2a2 2 0 0 1 2-2h9l3 4h14a2 2 0 0 1 2 2v4H0z" fill="#e3a826" /><rect x="0" y="7" width="30" height="21" rx="2" fill="#fbd75b" /><rect x="9" y="20" width="12" height="8" rx="1" fill="#1f86d6" /></svg>
      </TaskApp>
      <TaskApp cls="ml-[25px] w-[30px] h-[30px]">
        <svg width="30" height="30" viewBox="0 0 30 30"><defs><linearGradient id="eg" x1="0" y1="0" x2="1" y2="1"><stop offset="0" stopColor="#35c1a0" /><stop offset="1" stopColor="#1366c4" /></linearGradient></defs><circle cx="15" cy="15" r="15" fill="url(#eg)" /><path d="M6 18c0-8 8-12 14-9 4 2 4 8 0 8h-8c0 5 7 7 14 3-3 6-9 9-14 8-4-1-6-5-6-10z" fill="#e8f5f5" /><path d="M10 17c1-4 6-5 9-3v3z" fill="#1c7fc4" /></svg>
      </TaskApp>
      <TaskApp cls="ml-[25px] w-[28px] h-[32px]">
        <svg width="28" height="32" viewBox="0 0 28 32" fill="none"><path d="M8 8V4a3 3 0 0 1 3-3h6a3 3 0 0 1 3 3v4" stroke="#2f7fd0" strokeWidth="2" /><rect x="0" y="7" width="28" height="25" rx="3" fill="#1b4f8a" /><rect x="8" y="13" width="5.500" height="5.500" fill="#e8543a" /><rect x="14.500" y="13" width="5.500" height="5.500" fill="#7bbb3a" /><rect x="8" y="19.500" width="5.500" height="5.500" fill="#2ea0e6" /><rect x="14.500" y="19.500" width="5.500" height="5.500" fill="#f6b52a" /></svg>
      </TaskApp>
      <TaskApp cls="ml-[26px] w-[30px] h-[30px] rounded-full bg-[#a32a22] border border-[#c9a09c] text-white text-[22px] font-bold">P</TaskApp>
      <div className="ml-[25px] w-[30px] h-[30px] relative shrink-0">
        <svg width="30" height="30" viewBox="0 0 24 24"><path d="M12 12L1.600 6A12 12 0 0 1 22.400 6z" fill="#dd4a3a" /><path d="M12 12L22.400 6A12 12 0 0 1 12 24z" fill="#f3c12f" /><path d="M12 12L12 24A12 12 0 0 1 1.600 6z" fill="#3aa655" /><circle cx="12" cy="12" r="5.500" fill="#fff" /><circle cx="12" cy="12" r="4.300" fill="#3f7fe8" /></svg>
        <span className="absolute left-[12px] top-[36px] w-[6px] h-[6px] rounded-full bg-[#7d8487]" />
      </div>
      <div className="ml-[25px] w-[30px] h-[30px] relative shrink-0 rounded-[4px] bg-[#7fc91f] flex items-center justify-center">
        <svg width="20" height="24" viewBox="0 0 20 24" fill="none" stroke="#fff" strokeWidth="4"><path d="M19 3H4v18h15" /></svg>
        <span className="absolute left-[12px] top-[36px] w-[6px] h-[6px] rounded-full bg-[#7d8487]" />
      </div>
      <div className="ml-[16px] w-[48px] h-[48px] relative shrink-0 rounded-[5px] bg-white/60 flex items-center justify-center">
        <div className="w-[30px] h-[30px] rounded-[4px] bg-[#e9443a] flex items-center justify-center">
          <svg width="20" height="24" viewBox="0 0 20 24" fill="none" stroke="#fff" strokeWidth="4"><path d="M19 3H4v18h15" /></svg>
        </div>
        <span className="absolute left-[14px] bottom-[1px] w-[20px] h-[4px] rounded-full bg-[#2a8f8f]" />
      </div>
      <svg width="16" height="10" viewBox="0 0 16 10" fill="none" stroke="#222" strokeWidth="1.600" className="ml-[158px] shrink-0"><path d="M1 9l7-7 7 7" /></svg>
      <svg width="24" height="24" viewBox="0 0 24 24" className="ml-[18px] shrink-0"><circle cx="11" cy="10" r="7" fill="#7d8790" /><circle cx="16" cy="16" r="7" fill="#1b6ec2" /><rect x="15" y="14" width="2" height="6" fill="#fff" /><rect x="15" y="11" width="2" height="2" fill="#fff" /></svg>
      <svg width="18" height="26" viewBox="0 0 18 26" fill="none" stroke="#444" strokeWidth="1.300" className="ml-[20px] shrink-0"><rect x="5" y="1" width="8" height="16" rx="4" /><path d="M2 11c0 9 14 9 14 0M9 18v7" /></svg>
      <div className="ml-[28px] w-[18px] text-[14px] font-['DejaVu_Sans',sans-serif] shrink-0" dir="rtl">فا</div>
      <svg width="22" height="22" viewBox="0 0 22 22" fill="none" stroke="#222" strokeWidth="1.500" className="ml-[29px] shrink-0"><path d="M1 8c5-6 15-6 20 0M4 12c4-4 10-4 14 0M7 15c2-2 6-2 8 0" /><circle cx="11" cy="19" r="1.500" fill="#222" /></svg>
      <svg width="22" height="24" viewBox="0 0 22 24" fill="none" stroke="#222" strokeWidth="1.300" className="ml-[9px] shrink-0"><path d="M2 9v6h4l5 5V4L6 9zM14 8c2 2 2 6 0 8M17 5c3 4 3 10 0 14" /></svg>
      <svg width="22" height="18" viewBox="0 0 22 18" fill="none" stroke="#222" strokeWidth="1.400" className="ml-[8px] shrink-0"><rect x="1" y="2" width="17" height="14" rx="2.500" /><rect x="4" y="5" width="9" height="8" fill="#222" /><path d="M20 6v6" strokeWidth="2" /></svg>
      <div className="ml-[16px] mb-[2px] w-[64px] flex flex-col items-center text-[14.500px] leading-[20px] whitespace-nowrap shrink-0">
        <div>10:10 PM</div>
        <div>6/1/2025</div>
      </div>
      <svg width="20" height="24" viewBox="0 0 20 24" fill="none" stroke="#222" strokeWidth="1.300" className="ml-[15px] shrink-0"><path d="M3 17c2-2 1-5 2-8 1-4 8-4 9-1M14 11c0 3 1 4 3 6zM1 18h18M7 18c0 4 6 4 6 0M13 2h5l-5 5h5" /></svg>
    </div>
  );
}

function Corners() {
  return (
    <>
      <svg width="20" height="16" viewBox="0 0 20 16" className="absolute left-0 top-0 z-20"><path d="M0 0h18C10 2 3 7 0 15z" fill="#a3001c" /></svg>
      <svg width="20" height="20" viewBox="0 0 20 20" className="absolute right-0 top-0 z-20"><path d="M3 0h17v18C16 10 10 3 3 0z" fill="#a3001c" /></svg>
      <svg width="20" height="22" viewBox="0 0 20 22" className="absolute left-0 bottom-0 z-20"><path d="M0 0v22h18C9 20 2 12 0 0z" fill="#0a0a0a" /></svg>
      <svg width="22" height="22" viewBox="0 0 22 22" className="absolute right-0 bottom-0 z-20"><path d="M22 0v22H2C12 20 20 11 22 0z" fill="#0a0a0a" /></svg>
    </>
  );
}

export default function App() {
  return (
    <div className="relative w-[1920px] h-[1080px] overflow-hidden flex flex-col bg-[#efeef1] font-['Noto_Sans',sans-serif]">
      <TabStrip />
      <AddressBar />
      <div className="h-[3px] bg-[#e4e4e7] shrink-0" />
      <TopBar />
      <div className="h-[5px] shrink-0" />
      <div className="flex flex-1 min-h-0">
        <LeftBar />
        <div className="w-[1789px] ml-[5px] flex flex-col shrink-0">
          <div className="bg-white rounded-t-[6px] rounded-b-[6px] overflow-hidden flex flex-col shrink-0">
            <Chart />
            <TimeAxis />
            <RangeBar />
          </div>
          <div className="h-[5px] shrink-0" />
          <BottomPanel />
        </div>
        <div className="w-[6px] shrink-0" />
        <RightBar />
      </div>
      <Taskbar />
      <Corners />
    </div>
  );
}
